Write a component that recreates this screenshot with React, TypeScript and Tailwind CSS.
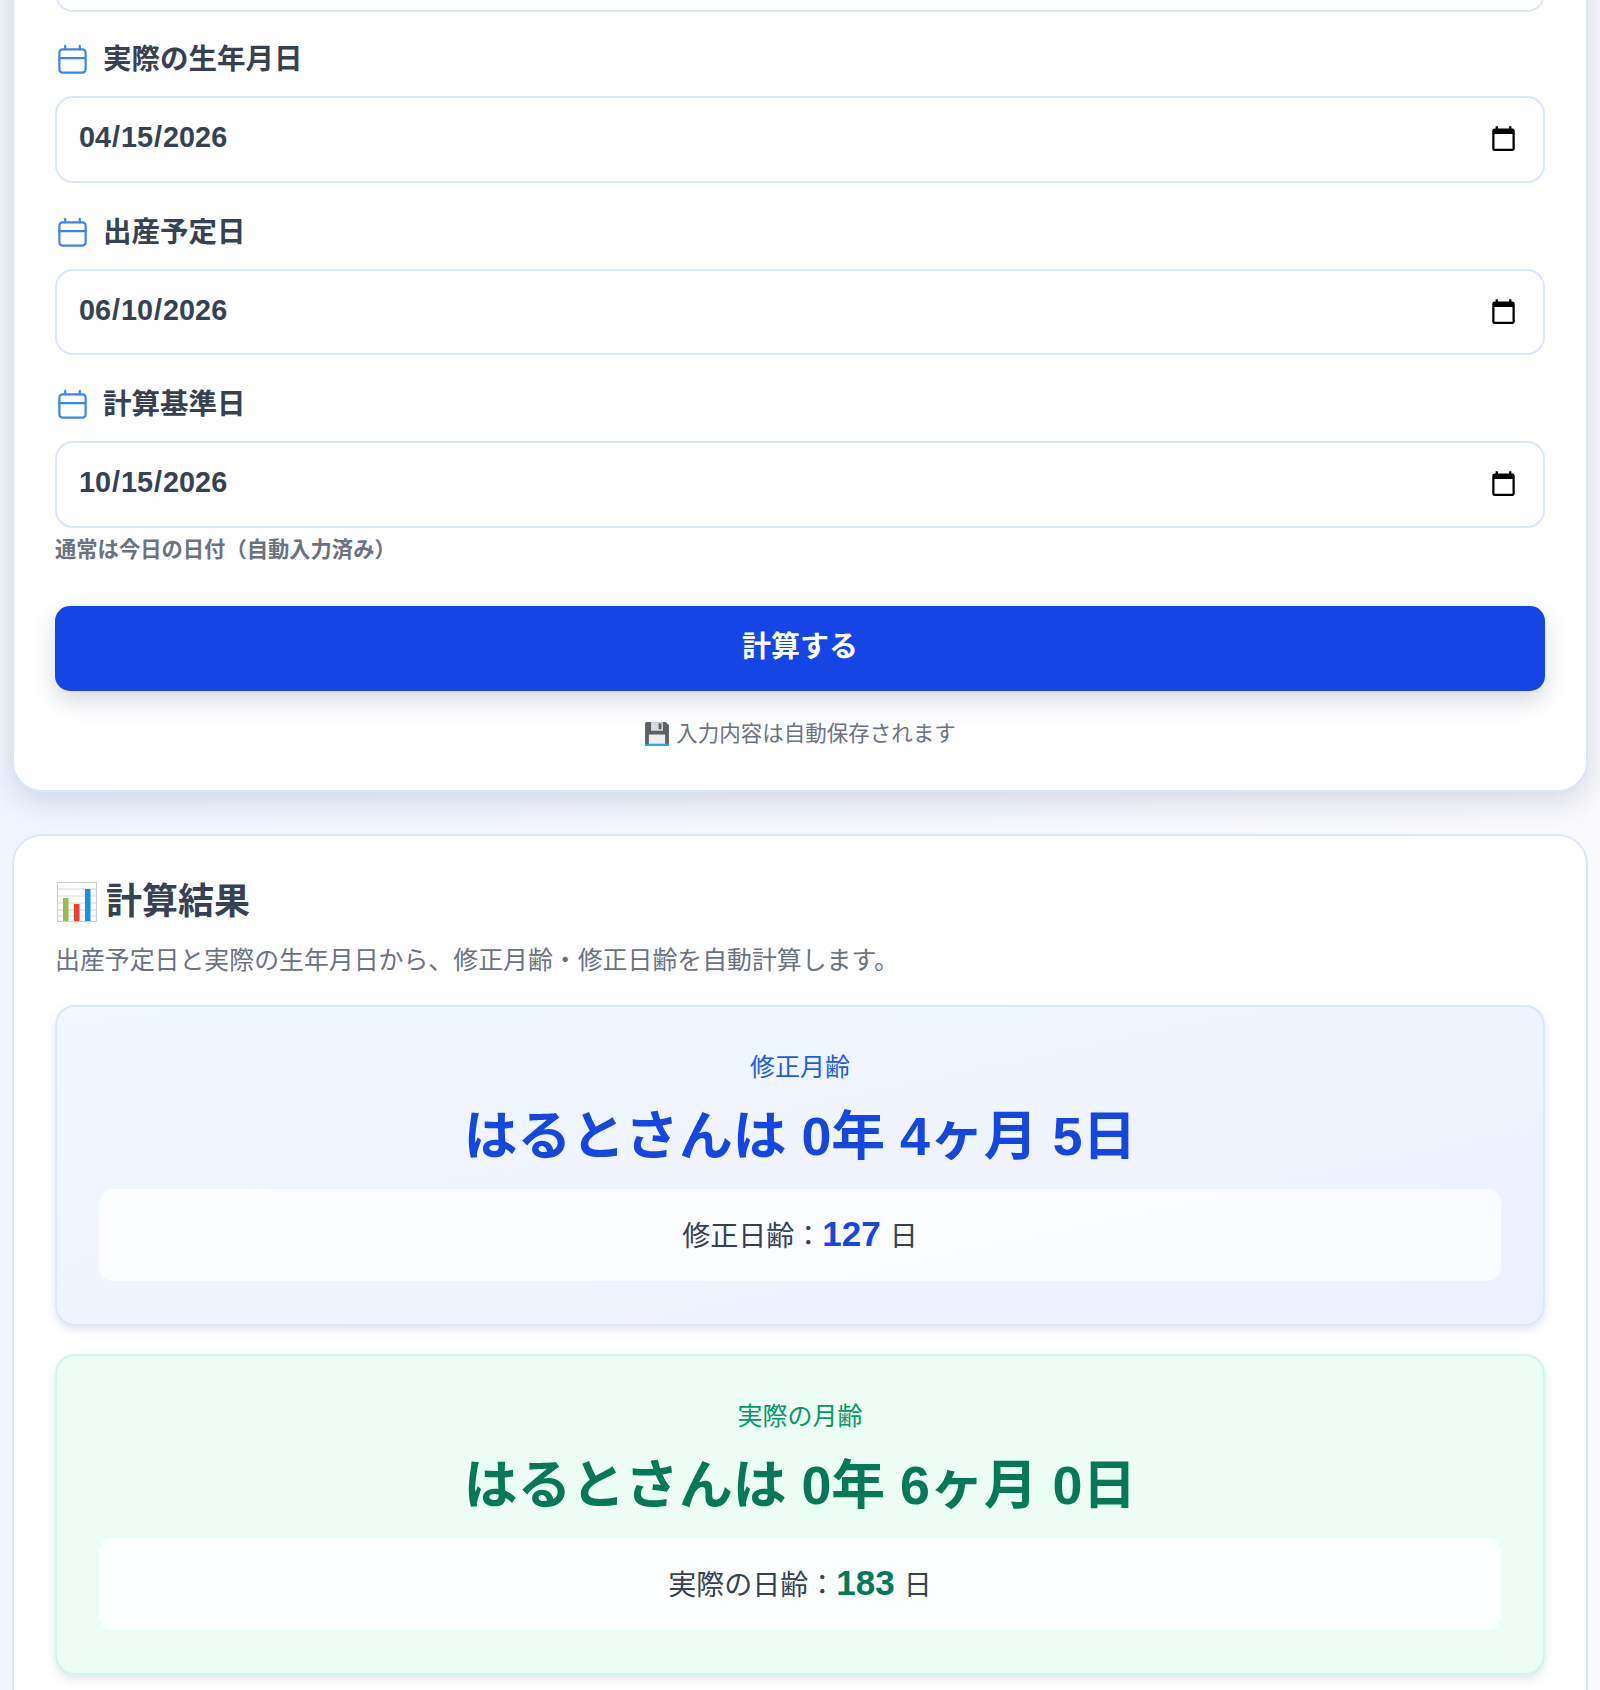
const FONT = "[font-family:'Liberation_Sans','Noto_Sans_CJK_JP',sans-serif]";

function CalendarIcon() {
  return (
    <svg viewBox="0 0 24 24" fill="none" stroke="#3b82f6" strokeWidth="1.5" strokeLinecap="round" strokeLinejoin="round" className="h-[35px] w-[35px] shrink-0">
      <path d="M7 2.7v2.3M17 2.700v2.300" />
      <rect x="3" y="5" width="18" height="16" rx="2.2" />
      <path d="M3 11h18" />
    </svg>
  );
}

function ChartIcon() {
  return (
    <svg viewBox="0 0 40 40" className="ml-[2px] h-[40px] w-[40px] shrink-0">
      <rect x="0.5" y="0.5" width="39" height="39" fill="#fdfdfd" stroke="#c9ced3" />
      <path d="M1 7h38M1 14h38M1 21h38M1 28h38M1 34h38" stroke="#d4d8dc" strokeWidth="1" />
      <rect x="6" y="16" width="5.5" height="23" fill="#94c14e" />
      <rect x="17" y="22" width="5.5" height="17" fill="#ee3f2e" />
      <rect x="28" y="7" width="5.5" height="32" fill="#1692e5" />
    </svg>
  );
}

function SaveIcon() {
  return (
    <svg viewBox="0 0 24 24" className="h-[26px] w-[26px] shrink-0">
      <path d="M1 2.500A1.500 1.500 0 0 1 2.500 1H20l3 3v17.500a1.500 1.500 0 0 1-1.500 1.500h-19A1.500 1.500 0 0 1 1 21.500z" fill="#5c6066" />
      <rect x="6.500" y="1" width="11" height="8" fill="#d8dadd" />
      <rect x="13.500" y="2.200" width="2.600" height="5.400" fill="#5c6066" />
      <rect x="4.500" y="12.500" width="15" height="10.500" fill="#eceef0" />
      <rect x="1" y="21" width="22" height="2" fill="#2aa4e8" />
    </svg>
  );
}

function DateField({ label, value }: { label: string; value: string }) {
  return (
    <div>
      <label className="flex h-[33px] items-center gap-[13px] text-[28.5px] font-bold leading-none text-[#374151]">
        <CalendarIcon />
        {label}
      </label>
      <input
        type="date"
        defaultValue={value}
        className="mt-[20px] h-[86.5px] w-full rounded-[18px] border-2 border-[#dbe7fb] bg-white pb-[3px] pl-[21px] pr-[23px] text-[28.8px] font-bold text-[#374151] [&::-webkit-calendar-picker-indicator]:mt-[4px]"
      />
    </div>
  );
}

function ResultBox({
  title,
  name,
  total,
  totalLabel,
  boxClass,
  titleClass,
  valueClass,
  innerClass,
}: {
  title: string;
  name: string;
  total: number;
  totalLabel: string;
  boxClass: string;
  titleClass: string;
  valueClass: string;
  innerClass: string;
}) {
  return (
    <div className={`rounded-[20px] border-2 px-[42px] pb-[43px] pt-[44px] text-center shadow-[0_4px_10px_rgba(30,64,120,0.13)] ${boxClass}`}>
      <p className={`text-[25px] leading-[32px] ${titleClass}`}>{title}</p>
      <p className={`mt-[13px] text-[53.8px] font-bold leading-[80px] ${valueClass}`}>{name}</p>
      <div className={`mt-[13px] flex h-[92px] items-baseline justify-center rounded-[14px] pt-[19px] text-[28px] text-[#374151] ${innerClass}`}>
        {totalLabel}：<span className={`mr-[9px] text-[35px] font-bold ${valueClass}`}>{total}</span>日
      </div>
    </div>
  );
}

export default function App() {
  return (
    <div className={`h-[1690px] overflow-hidden bg-gradient-to-r from-[#f1f5ff] to-[#fafafc] px-[12px] ${FONT}`}>
      <section className="-mt-[110px] rounded-[30px] border-2 border-[#dbe7fb] bg-white px-[41px] pb-[42px] pt-[32px] shadow-[0_10px_30px_rgba(30,50,90,0.16)]">
        <div className="h-[88px] rounded-[18px] border-2 border-[#dbe7fb]" />
        <div className="mt-[31px] space-y-[33px]">
          <DateField label="実際の生年月日" value="2026-04-15" />
          <DateField label="出産予定日" value="2026-06-10" />
          <DateField label="計算基準日" value="2026-10-15" />
        </div>
        <p className="mt-[8px] text-[21.3px] font-semibold leading-[28px] text-[#6b7280]">通常は今日の日付（自動入力済み）</p>
        <button className="mt-[42px] h-[85px] w-full rounded-[15px] bg-[#1546e5] text-[29px] font-bold text-white shadow-[0_10px_25px_rgba(30,50,90,0.18)]">
          計算する
        </button>
        <p className="mt-[29px] flex items-center justify-center gap-[6px] text-[21.5px] leading-[28px] text-[#6b7280]">
          <SaveIcon />
          入力内容は自動保存されます
        </p>
      </section>

      <section className="mt-[42px] rounded-[30px] border-2 border-[#dbe7fb] bg-white px-[41px] pb-[60px] pt-[44px]">
        <h2 className="flex h-[44px] items-center gap-[9px] text-[36px] font-bold text-[#374151]">
          <ChartIcon />
          計算結果
        </h2>
        <p className="mt-[20px] text-[24.9px] leading-[32px] text-[#6b7280]">
          出産予定日と実際の生年月日から、修正月齢・修正日齢を自動計算します。
        </p>
        <div className="mt-[29px] space-y-[28px]">
          <ResultBox
            title="修正月齢"
            name="はるとさんは 0年 4ヶ月 5日"
            total={127}
            totalLabel="修正日齢"
            boxClass="border-[#dbe7fb] bg-gradient-to-br from-[#f1f7ff] to-[#edf1fe]"
            titleClass="text-[#1d5ee0]"
            valueClass="text-[#1546e0]"
            innerClass="bg-white/70"
          />
          <ResultBox
            title="実際の月齢"
            name="はるとさんは 0年 6ヶ月 0日"
            total={183}
            totalLabel="実際の日齢"
            boxClass="border-[#d3f7e6] bg-[#ecfdf6]"
            titleClass="text-[#059669]"
            valueClass="text-[#047857]"
            innerClass="bg-white/85"
          />
        </div>
      </section>
    </div>
  );
}
